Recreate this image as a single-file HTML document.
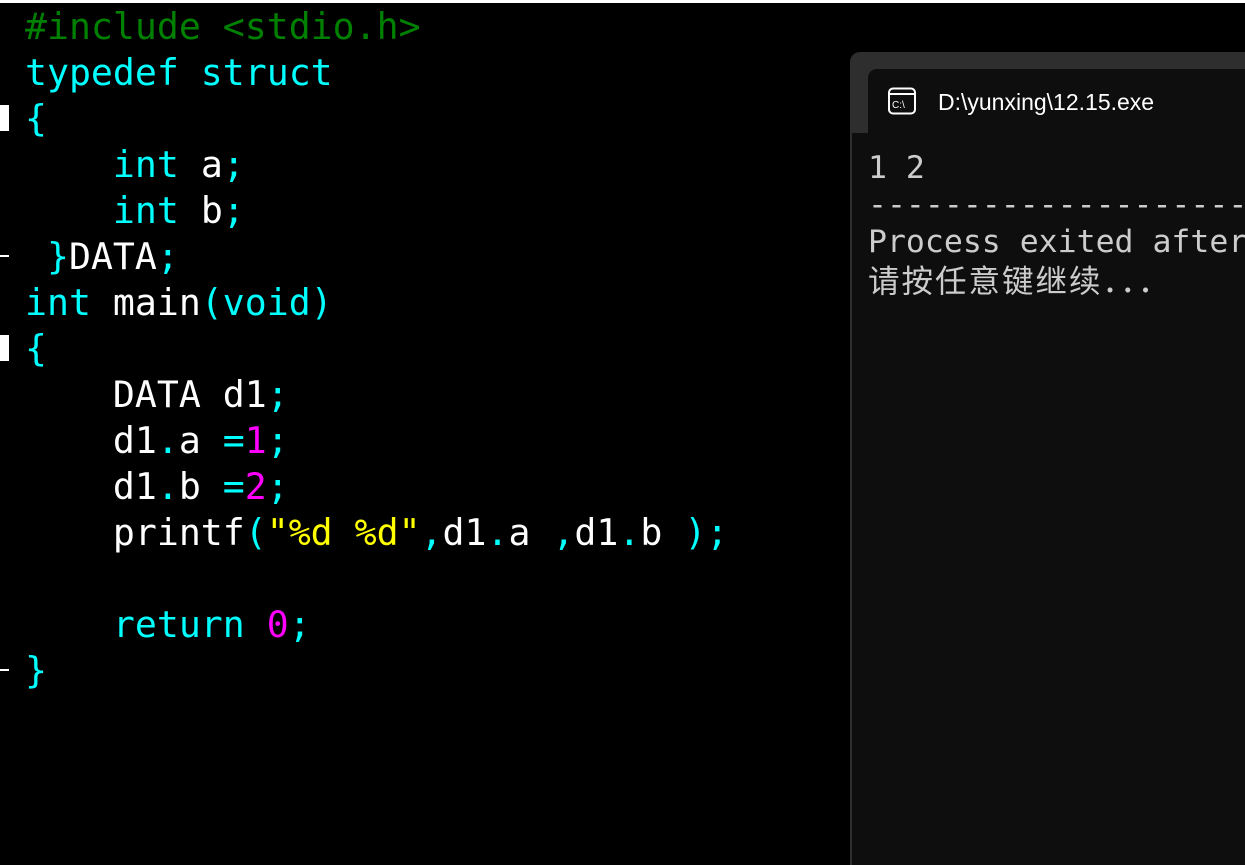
<!DOCTYPE html>
<html><head><meta charset="utf-8"><style>
html,body{margin:0;padding:0;width:1245px;height:865px;overflow:hidden;background:#000;position:relative;}
.top{position:absolute;left:0;top:0;width:1245px;height:3px;background:#fff;}
.code{position:absolute;left:25px;top:4px;font-family:"DejaVu Sans Mono","Liberation Mono",monospace;font-size:36.5px;line-height:46px;white-space:pre;color:#fff;}
.c{color:#00ffff}.g{color:#008000}.m{color:#ff00ff}.y{color:#ffff00}.w{color:#fff}
.mk{position:absolute;background:#fff;}
.win{position:absolute;left:850px;top:52px;width:395px;height:813px;background:#2e2e2e;border-radius:10px 0 0 0;}
.tab{position:absolute;left:868px;top:69px;width:377px;height:80px;background:#0e0e0e;border-radius:9px 0 0 0;}
.content{position:absolute;left:852px;top:133px;width:393px;height:732px;background:#0e0e0e;}
.title{position:absolute;left:938px;top:89px;font-family:"Liberation Sans",sans-serif;font-size:23px;color:#fff;white-space:nowrap;}
.con{position:absolute;left:868px;top:150px;width:377px;overflow:hidden;font-family:"DejaVu Sans Mono","Liberation Mono","Noto Sans CJK SC",monospace;font-size:31.5px;line-height:37px;color:#cccccc;white-space:pre;}
</style></head><body>
<div class="top"></div>
<div class="mk" style="left:0;top:105px;width:9px;height:26px"></div>
<div class="mk" style="left:0;top:255px;width:9px;height:2px"></div>
<div class="mk" style="left:0;top:335px;width:9px;height:26px"></div>
<div class="mk" style="left:0;top:669px;width:9px;height:2px"></div>
<div class="code"><span class="g">#include &lt;stdio.h&gt;</span>
<span class="c">typedef struct</span>
<span class="c">{</span>
    <span class="c">int</span> a<span class="c">;</span>
    <span class="c">int</span> b<span class="c">;</span>
 <span class="c">}</span>DATA<span class="c">;</span>
<span class="c">int</span> main<span class="c">(void)</span>
<span class="c">{</span>
    DATA d1<span class="c">;</span>
    d1<span class="c">.</span>a <span class="c">=</span><span class="m">1</span><span class="c">;</span>
    d1<span class="c">.</span>b <span class="c">=</span><span class="m">2</span><span class="c">;</span>
    printf<span class="c">(</span><span class="y">"%d %d"</span><span class="c">,</span>d1<span class="c">.</span>a <span class="c">,</span>d1<span class="c">.</span>b <span class="c">);</span>

    <span class="c">return</span> <span class="m">0</span><span class="c">;</span>
<span class="c">}</span></div>
<div class="win"></div>
<div class="content"></div>
<div class="tab"></div>
<svg style="position:absolute;left:888px;top:87px" width="28" height="28" viewBox="0 0 28 28">
<rect x="1" y="1.5" width="26" height="25" rx="4" fill="none" stroke="#fff" stroke-width="2"/>
<line x1="1" y1="7" x2="27" y2="7" stroke="#fff" stroke-width="2"/>
<text x="4" y="21" font-family="Liberation Sans,sans-serif" font-size="10" fill="#fff">C:\</text>
</svg>
<div class="title">D:\yunxing\12.15.exe</div>
<div class="con">1 2
--------------------------------
Process exited after
<span style="font-family:'Noto Sans CJK SC',sans-serif;letter-spacing:2px">请按任意键继续．．．</span></div>
</body></html>
